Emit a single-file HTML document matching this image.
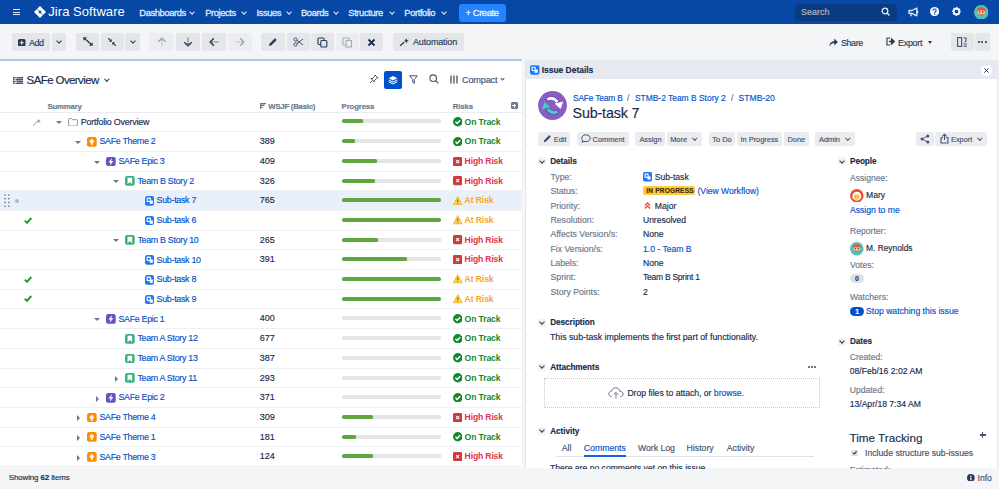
<!DOCTYPE html><html><head><meta charset="utf-8"><style>

*{box-sizing:border-box;margin:0;padding:0}
html,body{width:999px;height:489px;overflow:hidden;background:#F4F5F7;font-family:"Liberation Sans",sans-serif;color:#172B4D}
.abs{position:absolute}
.t{position:absolute;white-space:nowrap;line-height:1;-webkit-text-stroke:0.15px currentColor}
#nav{position:absolute;left:0;top:0;width:999px;height:24px;background:#0747A6}
.nv{position:absolute;top:7.5px;color:#DEEBFF;font-size:9.4px;letter-spacing:-0.4px;line-height:10px;-webkit-text-stroke:0.3px #DEEBFF}
.chev{position:absolute;width:4px;height:4px;border-right:1.3px solid currentColor;border-bottom:1.3px solid currentColor;transform:rotate(45deg)}
.btn{position:absolute;top:33.3px;height:17.5px;background:#E4E6EA;border-radius:2px}
.btn.dis{background:#ECEDF0}
#left{position:absolute;left:0;top:59px;width:522px;height:409px;background:#fff}
#right{position:absolute;left:525px;top:60px;width:472px;height:408px;background:#fff;border-left:1px solid #E3E5E9}
#foot{position:absolute;left:0;top:469px;width:999px;height:20px;background:#F4F5F7}
.row{position:absolute;left:0;width:522px;border-bottom:1px solid #EEF0F2}
.lk{color:#0052CC}
.ic{position:absolute;width:9.5px;height:10px;border-radius:2px}
.caret{position:absolute;width:0;height:0}
.pb{position:absolute;left:341.5px;width:99.5px;height:4px;border-radius:1.5px;background:#E4E5E7;overflow:hidden}
.pb i{position:absolute;left:0;top:0;height:4px;background:#5FA541;border-radius:1.5px}
.rk{position:absolute;left:453px;font-size:8.6px;font-weight:bold;letter-spacing:-0.2px;line-height:10px}
.lbl{color:#6B778C}
.rb{position:absolute;top:131.5px;height:14px;background:#EBECF0;border-radius:2px;font-size:8.2px;line-height:14px;color:#42526E;letter-spacing:-0.2px}

</style></head><body>
<div id="nav">
<div class="abs" style="left:13px;top:9px;width:7px;height:1.4px;background:#DEEBFF"></div>
<div class="abs" style="left:13px;top:11.5px;width:7px;height:1.4px;background:#DEEBFF"></div>
<div class="abs" style="left:13px;top:14px;width:7px;height:1.4px;background:#DEEBFF"></div>
<svg class="abs" style="left:34px;top:6.3px" width="12" height="12" viewBox="0 0 12 12"><path d="M6 0 L12 6 L6 12 L0 6 Z" fill="#fff"/><path d="M6 4.3 L7.7 6 L6 7.7 L4.3 6 Z" fill="#0747A6"/><path d="M3.2 3.2 L5.2 5.2" stroke="#0747A6" stroke-width="0.7"/><path d="M8.8 8.8 L6.8 6.8" stroke="#0747A6" stroke-width="0.7"/></svg>
<div class="t" style="left:48.3px;top:5.3px;font-size:13px;color:#fff;letter-spacing:0.05px;line-height:14px;-webkit-text-stroke:0">Jira Software</div>
<div class="nv" style="left:139.3px">Dashboards</div>
<div class="chev" style="left:190px;top:9.6px;color:#DEEBFF;border-width:1.5px;width:4.2px;height:4.2px"></div>
<div class="nv" style="left:205.2px">Projects</div>
<div class="chev" style="left:242px;top:9.6px;color:#DEEBFF;border-width:1.5px;width:4.2px;height:4.2px"></div>
<div class="nv" style="left:256.4px">Issues</div>
<div class="chev" style="left:286.5px;top:9.6px;color:#DEEBFF;border-width:1.5px;width:4.2px;height:4.2px"></div>
<div class="nv" style="left:301px">Boards</div>
<div class="chev" style="left:333.5px;top:9.6px;color:#DEEBFF;border-width:1.5px;width:4.2px;height:4.2px"></div>
<div class="nv" style="left:348.3px">Structure</div>
<div class="chev" style="left:389.5px;top:9.6px;color:#DEEBFF;border-width:1.5px;width:4.2px;height:4.2px"></div>
<div class="nv" style="left:404.3px">Portfolio</div>
<div class="chev" style="left:442px;top:9.6px;color:#DEEBFF;border-width:1.5px;width:4.2px;height:4.2px"></div>
<div class="abs" style="left:459px;top:3.5px;width:46.5px;height:18px;background:#2684FF;border-radius:3px"></div>
<div class="nv" style="left:465.5px;color:#fff">+ Create</div>
<div class="abs" style="left:795px;top:3.5px;width:102px;height:17.5px;background:#0A3A80;border-radius:3px"></div>
<div class="t" style="left:801px;top:7px;font-size:9px;color:#B3BAC5;line-height:10px">Search</div>
<svg class="abs" style="left:881px;top:7px" width="10" height="10" viewBox="0 0 10 10"><circle cx="4" cy="4" r="2.8" stroke="#DEEBFF" stroke-width="1.3" fill="none"/><path d="M6 6 L8.5 8.5" stroke="#DEEBFF" stroke-width="1.4"/></svg>
<svg class="abs" style="left:907.5px;top:7px" width="11" height="10" viewBox="0 0 11 10"><path d="M1 3.5 H4 L8.8 1 V8.8 L4 6.3 H1Z" stroke="#DEEBFF" stroke-width="1.3" fill="none" stroke-linejoin="round"/><path d="M2.5 6.5 L3.3 9.3" stroke="#DEEBFF" stroke-width="1.3"/><path d="M9.6 3.6 V6.2" stroke="#DEEBFF" stroke-width="1.2"/></svg>
<svg class="abs" style="left:930px;top:7px" width="9.2" height="9.2" viewBox="0 0 9.2 9.2"><circle cx="4.6" cy="4.6" r="4.6" fill="#F4F7FF"/><path d="M3.1 3.6 C3.1 2.6 3.8 2 4.6 2 C5.5 2 6.2 2.6 6.2 3.4 C6.2 4.2 5.6 4.5 5.1 4.9 C4.8 5.1 4.6 5.4 4.6 5.9 V6.2" stroke="#0747A6" stroke-width="1.05" fill="none"/><circle cx="4.6" cy="7.4" r="0.6" fill="#0747A6"/></svg>
<svg class="abs" style="left:951.6px;top:7.3px" width="9" height="9" viewBox="0 0 9 9"><circle cx="4.5" cy="4.5" r="2.75" stroke="#F4F7FF" stroke-width="1.8" fill="none"/><circle cx="4.5" cy="4.5" r="3.75" stroke="#F4F7FF" stroke-width="1.3" fill="none" stroke-dasharray="1.75 1.2" stroke-dashoffset="0.85"/></svg>
<svg class="abs" style="left:973.5px;top:4.8px" width="14.5" height="14.5" viewBox="0 0 14.5 14.5"><circle cx="7.25" cy="7.25" r="7.25" fill="#4FC3B5"/><path d="M3 6 Q3.2 2.2 7.6 2.3 Q11 2.3 11.6 5.2 L11.6 6.5 L3 6.5Z" fill="#E8533A"/><rect x="3.6" y="5.6" width="7.4" height="4" rx="1.5" fill="#F7C29A"/><path d="M3.4 8 Q7.3 13.5 11.2 8 L10.2 8.6 Q7.3 10.6 4.4 8.6Z" fill="#E8533A"/><circle cx="5.8" cy="7" r="0.7" fill="#2A2A2A"/><circle cx="8.8" cy="7" r="0.7" fill="#2A2A2A"/></svg>
</div>
<div class="btn " style="left:12px;width:38px"></div>
<div class="btn " style="left:52px;width:14px"></div>
<div class="btn " style="left:76px;width:23px"></div>
<div class="btn " style="left:101px;width:23px"></div>
<div class="btn " style="left:125px;width:15px"></div>
<div class="btn dis" style="left:149px;width:25px"></div>
<div class="btn " style="left:175.5px;width:24.0px"></div>
<div class="btn " style="left:201.5px;width:24.0px"></div>
<div class="btn dis" style="left:227.5px;width:24.0px"></div>
<div class="btn " style="left:261px;width:24px"></div>
<div class="btn " style="left:287px;width:22.5px"></div>
<div class="btn " style="left:311px;width:23px"></div>
<div class="btn dis" style="left:336px;width:22.5px"></div>
<div class="btn " style="left:360px;width:23px"></div>
<div class="btn " style="left:392.5px;width:71.5px"></div>
<div class="btn " style="left:951.3px;width:22.5px"></div>
<div class="btn " style="left:974.9px;width:14.800000000000068px"></div>
<svg class="abs" style="left:18.3px;top:38.7px" width="7.5" height="7.5" viewBox="0 0 7.5 7.5"><rect width="7.5" height="7.5" rx="1.5" fill="#253858"/><path d="M1.7 3.75 H5.8 M3.75 1.7 V5.8" stroke="#E5E7EB" stroke-width="1.2"/></svg>
<div class="t" style="left:29px;top:37.6px;font-size:9px;line-height:10px;color:#253858;letter-spacing:-0.45px">Add</div>
<div class="chev" style="left:57px;top:39px;color:#253858"></div>
<svg class="abs" style="left:82.8px;top:37.3px" width="10" height="9" viewBox="0 0 10 9"><path d="M2 1.8 L8 7.2" stroke="#253858" stroke-width="1.3"/><path d="M0.3 0.2 L4 0.2 L0.3 3.8 Z M9.7 8.8 L6 8.8 L9.7 5.2 Z" fill="#253858"/></svg>
<svg class="abs" style="left:108px;top:38px" width="8" height="8" viewBox="0 0 8 8"><path d="M0.3 0.3 L3 3 M5 5 L7.7 7.7" stroke="#253858" stroke-width="1.2"/><path d="M3.7 3.7 L3.7 0.9 L0.9 3.7Z M4.3 4.3 L4.3 7.1 L7.1 4.3Z" fill="#253858"/></svg>
<div class="chev" style="left:130.5px;top:39px;color:#253858"></div>
<svg class="abs" style="left:156.5px;top:37.3px;transform:rotate(0deg)" width="10" height="10" viewBox="0 0 10 10"><path d="M5 9.3 L5 2" stroke="#97A0AF" stroke-width="1.1" stroke-dasharray="1 0.8" fill="none"/><path d="M1.3 4.8 L5 1.2 L8.7 4.8" stroke="#97A0AF" stroke-width="1.4" fill="none"/></svg>
<svg class="abs" style="left:182.5px;top:37.3px;transform:rotate(180deg)" width="10" height="10" viewBox="0 0 10 10"><path d="M5 9.3 L5 2" stroke="#253858" stroke-width="1.1" stroke-dasharray="1 0.8" fill="none"/><path d="M1.3 4.8 L5 1.2 L8.7 4.8" stroke="#253858" stroke-width="1.4" fill="none"/></svg>
<svg class="abs" style="left:208.5px;top:37.3px;transform:rotate(-90deg)" width="10" height="10" viewBox="0 0 10 10"><path d="M5 9.3 L5 2" stroke="#253858" stroke-width="1.1" stroke-dasharray="1 0.8" fill="none"/><path d="M1.3 4.8 L5 1.2 L8.7 4.8" stroke="#253858" stroke-width="1.4" fill="none"/></svg>
<svg class="abs" style="left:234.5px;top:37.3px;transform:rotate(90deg)" width="10" height="10" viewBox="0 0 10 10"><path d="M5 9.3 L5 2" stroke="#97A0AF" stroke-width="1.1" stroke-dasharray="1 0.8" fill="none"/><path d="M1.3 4.8 L5 1.2 L8.7 4.8" stroke="#97A0AF" stroke-width="1.4" fill="none"/></svg>
<svg class="abs" style="left:268px;top:37px" width="10" height="10" viewBox="0 0 10 10"><path d="M1 9 L1.5 6.8 L7 1.3 L8.7 3 L3.2 8.5 Z" fill="#253858"/></svg>
<svg class="abs" style="left:293px;top:37px" width="11" height="10" viewBox="0 0 11 10"><circle cx="2.5" cy="2.5" r="1.6" stroke="#42526E" stroke-width="1" fill="none"/><circle cx="2.5" cy="7.5" r="1.6" stroke="#42526E" stroke-width="1" fill="none"/><path d="M3.8 3.3 L10 8 M3.8 6.7 L10 2" stroke="#42526E" stroke-width="1"/></svg>
<svg class="abs" style="left:317px;top:36.5px" width="11" height="11" viewBox="0 0 11 11"><rect x="1" y="1" width="6" height="6.5" rx="1" stroke="#253858" stroke-width="1.1" fill="none"/><rect x="3.8" y="3.5" width="6" height="6.5" rx="1" stroke="#253858" stroke-width="1.1" fill="#E5E7EB"/></svg>
<svg class="abs" style="left:342px;top:36.5px" width="11" height="11" viewBox="0 0 11 11"><rect x="1" y="1" width="6" height="7" rx="0.5" stroke="#A5ADBA" stroke-width="1.1" fill="none"/><rect x="4" y="3.5" width="5.5" height="6.5" stroke="#A5ADBA" stroke-width="1.1" fill="#EDEEF1"/></svg>
<svg class="abs" style="left:367px;top:37.5px" width="9" height="9" viewBox="0 0 9 9"><path d="M1.5 1.5 L7.5 7.5 M7.5 1.5 L1.5 7.5" stroke="#172B4D" stroke-width="1.8"/></svg>
<svg class="abs" style="left:398px;top:36px" width="12" height="12" viewBox="0 0 12 12"><path d="M2 9.8 L6.3 6.3" stroke="#253858" stroke-width="1.3"/><path d="M8.2 2.2 L9 4 L10.8 4.6 L9.1 5.4 L8.6 7.3 L7.6 5.6 L5.8 5.3 L7.3 4.2Z" fill="#253858"/><path d="M6 2.5 L6.6 3.1 M10.6 2.2 L10.1 2.8 M10.3 7.2 L9.8 6.7" stroke="#6B778C" stroke-width="0.6"/></svg>
<div class="t" style="left:413px;top:37px;font-size:9px;line-height:10px;color:#253858;letter-spacing:-0.15px">Automation</div>
<svg class="abs" style="left:829px;top:37.5px" width="9" height="9" viewBox="0 0 9 9"><path d="M0.5 8.5 C0.6 4.8 2.6 3.2 5.3 3.2 L5.3 0.6 L8.9 4.1 L5.3 7.6 L5.3 5 C3.3 5 1.8 6 0.5 8.5Z" fill="#253858"/></svg>
<div class="t" style="left:841px;top:37.5px;font-size:9px;line-height:10px;color:#253858;letter-spacing:-0.45px">Share</div>
<svg class="abs" style="left:886px;top:37px" width="9" height="9" viewBox="0 0 9 9"><path d="M4 1 L1 1 L1 8 L4 8" stroke="#253858" stroke-width="1.1" fill="none"/><path d="M3 4.5 L6 4.5 M5.5 2 L8.3 4.5 L5.5 7Z" stroke="#253858" stroke-width="1.3" fill="#253858"/></svg>
<div class="t" style="left:898px;top:37.5px;font-size:9px;line-height:10px;color:#253858;letter-spacing:-0.3px">Export</div>
<div class="caret abs" style="left:928px;top:41px;border-left:2.7px solid transparent;border-right:2.7px solid transparent;border-top:3px solid #253858"></div>
<svg class="abs" style="left:957.3px;top:37.3px" width="11" height="10" viewBox="0 0 11 10"><rect x="0.6" y="0.6" width="4" height="8.8" stroke="#42526E" stroke-width="1.1" fill="none"/><path d="M6.5 1 L9 1 L9 4 L7.8 5 M6.5 7 L10 7 M6.5 9.3 L10 9.3" stroke="#42526E" stroke-width="1.1" fill="none"/></svg>
<div class="abs" style="left:977.9px;top:40.8px;width:1.8px;height:1.8px;border-radius:50%;background:#253858"></div>
<div class="abs" style="left:981.4px;top:40.8px;width:1.8px;height:1.8px;border-radius:50%;background:#253858"></div>
<div class="abs" style="left:984.9px;top:40.8px;width:1.8px;height:1.8px;border-radius:50%;background:#253858"></div>
<div id="left">
<div class="abs" style="left:0;top:0;width:522px;height:1.5px;background:#A9C8F5"></div>
<svg class="abs" style="left:13.2px;top:17.8px" width="10" height="7.2" viewBox="0 0 10 7.2"><path d="M0 0.7 H2.5 M3.5 0.7 H10 M0 2.8 H1.5 M2.5 2.8 H10 M0 4.8 H2.5 M3.5 4.8 H10 M0 6.6 H1.5 M2.5 6.6 H10" stroke="#42526E" stroke-width="1.4"/></svg>
<div class="t" style="left:26.6px;top:15.3px;font-size:11.5px;line-height:13px;letter-spacing:-0.6px;color:#172B4D">SAFe Overview</div>
<div class="chev" style="left:104.6px;top:17.6px;color:#172B4D;width:3.6px;height:3.6px;border-right-width:1.5px;border-bottom-width:1.5px"></div>
<svg class="abs" style="left:368.5px;top:15px" width="10" height="10" viewBox="0 0 10 10"><path d="M6 1 L9 4 L7.5 4.5 L5.5 6.5 L5.5 8 L2 4.5 L3.5 4.5 L5.5 2.5Z" stroke="#42526E" stroke-width="1" fill="none" stroke-linejoin="round"/><path d="M3.5 6.5 L1 9" stroke="#42526E" stroke-width="1"/></svg>
<div class="abs" style="left:384px;top:11.5px;width:17.5px;height:18px;background:#0052CC;border-radius:2px"></div>
<svg class="abs" style="left:388px;top:15.5px" width="10" height="10" viewBox="0 0 10 10"><path d="M5 1 L9.3 3.2 L5 5.4 L0.7 3.2Z" fill="#fff"/><path d="M0.7 5 L5 7.2 L9.3 5 M0.7 6.8 L5 9 L9.3 6.8" stroke="#fff" stroke-width="1" fill="none"/></svg>
<svg class="abs" style="left:409px;top:15.5px" width="9" height="9" viewBox="0 0 9 9"><path d="M0.7 0.8 H8.3 L5.3 4.5 V8.3 L3.7 7.3 V4.5Z" stroke="#42526E" stroke-width="1" fill="none" stroke-linejoin="round"/></svg>
<svg class="abs" style="left:429px;top:15px" width="10" height="10" viewBox="0 0 10 10"><circle cx="4.2" cy="4.2" r="3.3" stroke="#42526E" stroke-width="1.1" fill="none"/><path d="M6.7 6.7 L9.3 9.3" stroke="#42526E" stroke-width="1.2"/></svg>
<svg class="abs" style="left:450px;top:15.5px" width="8" height="9" viewBox="0 0 8 9"><path d="M1 0.5 V8.5 M4 0.5 V8.5 M7 0.5 V8.5" stroke="#42526E" stroke-width="1.3"/></svg>
<div class="t" style="left:462px;top:15.5px;font-size:9.2px;line-height:10px;letter-spacing:-0.2px;color:#42526E">Compact</div>
<div class="chev" style="left:500.8px;top:17.5px;color:#42526E;width:3.2px;height:3.2px"></div>
<div class="t" style="left:47.5px;top:43.3px;font-size:7.8px;line-height:9px;font-weight:bold;letter-spacing:-0.2px;color:#6B778C">Summary</div>
<svg class="abs" style="left:259.5px;top:43.5px" width="6" height="6" viewBox="0 0 6 6"><path d="M0 0.6 H6 M0 2.4 H4.5 M0 4.2 H3 M0.6 0 V6" stroke="#6B778C" stroke-width="1.1"/></svg>
<div class="t" style="left:268.3px;top:43.3px;font-size:7.8px;line-height:9px;font-weight:bold;letter-spacing:-0.25px;color:#6B778C">WSJF (Basic)</div>
<div class="t" style="left:341.6px;top:43.3px;font-size:7.8px;line-height:9px;font-weight:bold;letter-spacing:-0.15px;color:#6B778C">Progress</div>
<div class="t" style="left:452.8px;top:43.3px;font-size:7.8px;line-height:9px;font-weight:bold;letter-spacing:-0.15px;color:#6B778C">Risks</div>
<div class="abs" style="left:510.5px;top:43px;width:7px;height:7px;background:#6B778C;border-radius:1.5px"></div>
<div class="abs" style="left:512px;top:46px;width:4px;height:1px;background:#fff"></div><div class="abs" style="left:513.5px;top:44.5px;width:1px;height:4px;background:#fff"></div>
<div class="abs" style="left:0;top:52.5px;width:522px;height:1px;background:#EBECF0"></div>
<div class="row" style="top:53.50px;height:19.70px;"></div>
<svg class="abs" style="left:68px;top:58.55px" width="10.2" height="8.6" viewBox="0 0 10.2 8.6"><path d="M0.55 1.3 Q0.55 0.55 1.3 0.55 H3.6 L4.6 1.7 H8.9 Q9.65 1.7 9.65 2.45 V7.3 Q9.65 8.05 8.9 8.05 H1.3 Q0.55 8.05 0.55 7.3Z" stroke="#8993A4" stroke-width="1" fill="none" stroke-linejoin="round"/></svg>
<svg class="abs" style="left:31.5px;top:57.35px" width="11" height="11" viewBox="0 0 11 11"><path d="M1.3 9.3 L4.8 6.2" stroke="#8993A4" stroke-width="1"/><path d="M6.7 3 L7.3 4.5 L8.8 5 L7.4 5.7 L7 7.2 L6.2 5.9 L4.7 5.6 L5.9 4.6Z" fill="#8993A4"/><path d="M4.8 2.6 L5.3 3.1 M8.8 2.6 L8.3 3.1 M8.6 7.3 L8.2 6.9" stroke="#A5ADBA" stroke-width="0.6"/></svg>
<div class="caret" style="left:55.50px;top:62.15px;border-left:3.1px solid transparent;border-right:3.1px solid transparent;border-top:3.1px solid #6B778C"></div>
<div class="t" style="left:80.70px;top:57.65px;font-size:8.9px;line-height:10px;letter-spacing:-0.2px;color:#172B4D">Portfolio Overview</div>
<div class="pb" style="top:60.45px"><i style="width:22%"></i></div>
<svg class="abs" style="left:452.8px;top:58.05px" width="9.5" height="9.5" viewBox="0 0 10 10"><circle cx="5" cy="5" r="5" fill="#14892C"/><path d="M2.6 5.1 L4.3 6.8 L7.5 3.4" stroke="#fff" stroke-width="1.5" fill="none"/></svg>
<div class="rk" style="top:57.55px;left:464.6px;color:#14892C;letter-spacing:-0.12px">On Track</div>
<div class="row" style="top:73.20px;height:19.70px;"></div>
<svg class="ic" style="left:87.3px;top:77.95px;width:9.7px;height:9.7px" viewBox="0 0 9.5 9.5"><rect width="9.5" height="9.5" rx="1.4" fill="#FF8B00"/><circle cx="4.7" cy="4.1" r="2" fill="#fff"/><rect x="3.8" y="5" width="1.8" height="1.9" fill="#fff"/><rect x="3.8" y="7.15" width="1.8" height="0.8" fill="#fff"/></svg>
<div class="caret" style="left:74.80px;top:81.85px;border-left:3.1px solid transparent;border-right:3.1px solid transparent;border-top:3.1px solid #6B778C"></div>
<div class="t" style="left:99.40px;top:77.35px;font-size:8.9px;line-height:10px;letter-spacing:-0.3px;color:#0052CC">SAFe Theme 2</div>
<div class="t" style="left:259.8px;top:77.15px;font-size:9px;line-height:10px;letter-spacing:-0.05px;color:#172B4D">389</div>
<div class="pb" style="top:80.15px"><i style="width:14%"></i></div>
<svg class="abs" style="left:452.8px;top:77.75px" width="9.5" height="9.5" viewBox="0 0 10 10"><circle cx="5" cy="5" r="5" fill="#14892C"/><path d="M2.6 5.1 L4.3 6.8 L7.5 3.4" stroke="#fff" stroke-width="1.5" fill="none"/></svg>
<div class="rk" style="top:77.25px;left:464.6px;color:#14892C;letter-spacing:-0.12px">On Track</div>
<div class="row" style="top:92.90px;height:19.70px;"></div>
<svg class="ic" style="left:106.3px;top:97.65px;width:9.7px;height:9.7px" viewBox="0 0 9.5 9.5"><rect width="9.5" height="9.5" rx="1.4" fill="#6554C0"/><path d="M6 1 L2.4 5.5 H4.5 L3.6 8.7 L7.2 4.1 H5.1 Z" fill="#fff"/></svg>
<div class="caret" style="left:93.80px;top:101.55px;border-left:3.1px solid transparent;border-right:3.1px solid transparent;border-top:3.1px solid #6B778C"></div>
<div class="t" style="left:118.40px;top:97.05px;font-size:8.9px;line-height:10px;letter-spacing:-0.3px;color:#0052CC">SAFe Epic 3</div>
<div class="t" style="left:259.8px;top:96.85px;font-size:9px;line-height:10px;letter-spacing:-0.05px;color:#172B4D">409</div>
<div class="pb" style="top:99.85px"><i style="width:35.5%"></i></div>
<svg class="abs" style="left:453px;top:97.55px" width="9.3" height="9.3" viewBox="0 0 10 10"><rect width="10" height="10" rx="1.6" fill="#CF3B3B"/><path d="M3.4 3.4 L6.6 6.6 M6.6 3.4 L3.4 6.6" stroke="#fff" stroke-width="1.2"/></svg>
<div class="rk" style="top:96.95px;left:464.6px;color:#DE3549;letter-spacing:-0.15px">High Risk</div>
<div class="row" style="top:112.60px;height:19.70px;"></div>
<svg class="ic" style="left:125.3px;top:117.35px;width:9.7px;height:9.7px" viewBox="0 0 9.5 9.5"><rect width="9.5" height="9.5" rx="1.4" fill="#36B37E"/><path d="M2.5 1.8 H7 V8 L4.75 5.9 L2.5 8Z" fill="#fff"/></svg>
<div class="caret" style="left:112.80px;top:121.25px;border-left:3.1px solid transparent;border-right:3.1px solid transparent;border-top:3.1px solid #6B778C"></div>
<div class="t" style="left:137.40px;top:116.75px;font-size:8.9px;line-height:10px;letter-spacing:-0.3px;color:#0052CC">Team B Story 2</div>
<div class="t" style="left:259.8px;top:116.55px;font-size:9px;line-height:10px;letter-spacing:-0.05px;color:#172B4D">326</div>
<div class="pb" style="top:119.55px"><i style="width:34%"></i></div>
<svg class="abs" style="left:453px;top:117.25px" width="9.3" height="9.3" viewBox="0 0 10 10"><rect width="10" height="10" rx="1.6" fill="#CF3B3B"/><path d="M3.4 3.4 L6.6 6.6 M6.6 3.4 L3.4 6.6" stroke="#fff" stroke-width="1.2"/></svg>
<div class="rk" style="top:116.65px;left:464.6px;color:#DE3549;letter-spacing:-0.15px">High Risk</div>
<div class="row" style="top:132.30px;height:19.70px;background:#EAF0FB;"></div>
<svg class="ic" style="left:144.5px;top:137.05px;width:9.7px;height:9.7px" viewBox="0 0 9.5 9.5"><rect width="9.5" height="9.5" rx="1.4" fill="#1D7AFC"/><rect x="2.1" y="2.1" width="3.2" height="3.3" rx="0.6" fill="none" stroke="#fff" stroke-width="1.1"/><rect x="4.6" y="4.4" width="3.1" height="3.2" fill="#fff"/></svg>
<div class="t" style="left:156.60px;top:136.45px;font-size:8.9px;line-height:10px;letter-spacing:-0.3px;color:#0052CC">Sub-task 7</div>
<svg class="abs" style="left:3px;top:134.15px" width="8" height="16" viewBox="0 0 8 16"><circle cx="2" cy="2" r="0.75" fill="#505F79"/><circle cx="5.8" cy="2" r="0.75" fill="#505F79"/><circle cx="2" cy="5.7" r="0.75" fill="#505F79"/><circle cx="5.8" cy="5.7" r="0.75" fill="#505F79"/><circle cx="2" cy="9.5" r="0.75" fill="#505F79"/><circle cx="5.8" cy="9.5" r="0.75" fill="#505F79"/><circle cx="2" cy="13.2" r="0.75" fill="#505F79"/><circle cx="5.8" cy="13.2" r="0.75" fill="#505F79"/></svg>
<div class="abs" style="left:14.6px;top:139.65px;width:4.8px;height:4.8px;border-radius:50%;background:#B3B9C4"></div>
<div class="t" style="left:259.8px;top:136.25px;font-size:9px;line-height:10px;letter-spacing:-0.05px;color:#172B4D">765</div>
<div class="pb" style="top:139.25px"><i style="width:100%"></i></div>
<svg class="abs" style="left:453px;top:136.55px" width="9.5" height="9.5" viewBox="0 0 10 10"><path d="M5 0.6 L9.6 9.3 H0.4Z" fill="#FFD450" stroke="#E6A700" stroke-width="0.7" stroke-linejoin="round"/><path d="M5 3.6 V6.3 M5 7.2 V8.1" stroke="#3B3B3B" stroke-width="0.9"/></svg>
<div class="rk" style="top:136.35px;left:464.6px;color:#F5A623;letter-spacing:-0.1px">At Risk</div>
<div class="row" style="top:152.00px;height:19.70px;"></div>
<svg class="ic" style="left:144.5px;top:156.75px;width:9.7px;height:9.7px" viewBox="0 0 9.5 9.5"><rect width="9.5" height="9.5" rx="1.4" fill="#1D7AFC"/><rect x="2.1" y="2.1" width="3.2" height="3.3" rx="0.6" fill="none" stroke="#fff" stroke-width="1.1"/><rect x="4.6" y="4.4" width="3.1" height="3.2" fill="#fff"/></svg>
<div class="t" style="left:156.60px;top:156.15px;font-size:8.9px;line-height:10px;letter-spacing:-0.3px;color:#0052CC">Sub-task 6</div>
<svg class="abs" style="left:24px;top:157.55px" width="8" height="7" viewBox="0 0 8 7"><path d="M0.8 3.6 L3 5.8 L7.3 1" stroke="#1A9A1A" stroke-width="1.9" fill="none"/></svg>
<div class="pb" style="top:158.95px"><i style="width:100%"></i></div>
<svg class="abs" style="left:453px;top:156.25px" width="9.5" height="9.5" viewBox="0 0 10 10"><path d="M5 0.6 L9.6 9.3 H0.4Z" fill="#FFD450" stroke="#E6A700" stroke-width="0.7" stroke-linejoin="round"/><path d="M5 3.6 V6.3 M5 7.2 V8.1" stroke="#3B3B3B" stroke-width="0.9"/></svg>
<div class="rk" style="top:156.05px;left:464.6px;color:#F5A623;letter-spacing:-0.1px">At Risk</div>
<div class="row" style="top:171.70px;height:19.70px;"></div>
<svg class="ic" style="left:125.3px;top:176.45px;width:9.7px;height:9.7px" viewBox="0 0 9.5 9.5"><rect width="9.5" height="9.5" rx="1.4" fill="#36B37E"/><path d="M2.5 1.8 H7 V8 L4.75 5.9 L2.5 8Z" fill="#fff"/></svg>
<div class="caret" style="left:112.80px;top:180.35px;border-left:3.1px solid transparent;border-right:3.1px solid transparent;border-top:3.1px solid #6B778C"></div>
<div class="t" style="left:137.40px;top:175.85px;font-size:8.9px;line-height:10px;letter-spacing:-0.3px;color:#0052CC">Team B Story 10</div>
<div class="t" style="left:259.8px;top:175.65px;font-size:9px;line-height:10px;letter-spacing:-0.05px;color:#172B4D">265</div>
<div class="pb" style="top:178.65px"><i style="width:36.6%"></i></div>
<svg class="abs" style="left:453px;top:176.35px" width="9.3" height="9.3" viewBox="0 0 10 10"><rect width="10" height="10" rx="1.6" fill="#CF3B3B"/><path d="M3.4 3.4 L6.6 6.6 M6.6 3.4 L3.4 6.6" stroke="#fff" stroke-width="1.2"/></svg>
<div class="rk" style="top:175.75px;left:464.6px;color:#DE3549;letter-spacing:-0.15px">High Risk</div>
<div class="row" style="top:191.40px;height:19.70px;"></div>
<svg class="ic" style="left:144.5px;top:196.15px;width:9.7px;height:9.7px" viewBox="0 0 9.5 9.5"><rect width="9.5" height="9.5" rx="1.4" fill="#1D7AFC"/><rect x="2.1" y="2.1" width="3.2" height="3.3" rx="0.6" fill="none" stroke="#fff" stroke-width="1.1"/><rect x="4.6" y="4.4" width="3.1" height="3.2" fill="#fff"/></svg>
<div class="t" style="left:156.60px;top:195.55px;font-size:8.9px;line-height:10px;letter-spacing:-0.3px;color:#0052CC">Sub-task 10</div>
<div class="t" style="left:259.8px;top:195.35px;font-size:9px;line-height:10px;letter-spacing:-0.05px;color:#172B4D">391</div>
<div class="pb" style="top:198.35px"><i style="width:66%"></i></div>
<svg class="abs" style="left:453px;top:196.05px" width="9.3" height="9.3" viewBox="0 0 10 10"><rect width="10" height="10" rx="1.6" fill="#CF3B3B"/><path d="M3.4 3.4 L6.6 6.6 M6.6 3.4 L3.4 6.6" stroke="#fff" stroke-width="1.2"/></svg>
<div class="rk" style="top:195.45px;left:464.6px;color:#DE3549;letter-spacing:-0.15px">High Risk</div>
<div class="row" style="top:211.10px;height:19.70px;"></div>
<svg class="ic" style="left:144.5px;top:215.85px;width:9.7px;height:9.7px" viewBox="0 0 9.5 9.5"><rect width="9.5" height="9.5" rx="1.4" fill="#1D7AFC"/><rect x="2.1" y="2.1" width="3.2" height="3.3" rx="0.6" fill="none" stroke="#fff" stroke-width="1.1"/><rect x="4.6" y="4.4" width="3.1" height="3.2" fill="#fff"/></svg>
<div class="t" style="left:156.60px;top:215.25px;font-size:8.9px;line-height:10px;letter-spacing:-0.3px;color:#0052CC">Sub-task 8</div>
<svg class="abs" style="left:24px;top:216.65px" width="8" height="7" viewBox="0 0 8 7"><path d="M0.8 3.6 L3 5.8 L7.3 1" stroke="#1A9A1A" stroke-width="1.9" fill="none"/></svg>
<div class="pb" style="top:218.05px"><i style="width:100%"></i></div>
<svg class="abs" style="left:453px;top:215.35px" width="9.5" height="9.5" viewBox="0 0 10 10"><path d="M5 0.6 L9.6 9.3 H0.4Z" fill="#FFD450" stroke="#E6A700" stroke-width="0.7" stroke-linejoin="round"/><path d="M5 3.6 V6.3 M5 7.2 V8.1" stroke="#3B3B3B" stroke-width="0.9"/></svg>
<div class="rk" style="top:215.15px;left:464.6px;color:#F5A623;letter-spacing:-0.1px">At Risk</div>
<div class="row" style="top:230.80px;height:19.70px;"></div>
<svg class="ic" style="left:144.5px;top:235.55px;width:9.7px;height:9.7px" viewBox="0 0 9.5 9.5"><rect width="9.5" height="9.5" rx="1.4" fill="#1D7AFC"/><rect x="2.1" y="2.1" width="3.2" height="3.3" rx="0.6" fill="none" stroke="#fff" stroke-width="1.1"/><rect x="4.6" y="4.4" width="3.1" height="3.2" fill="#fff"/></svg>
<div class="t" style="left:156.60px;top:234.95px;font-size:8.9px;line-height:10px;letter-spacing:-0.3px;color:#0052CC">Sub-task 9</div>
<svg class="abs" style="left:24px;top:236.35px" width="8" height="7" viewBox="0 0 8 7"><path d="M0.8 3.6 L3 5.8 L7.3 1" stroke="#1A9A1A" stroke-width="1.9" fill="none"/></svg>
<div class="pb" style="top:237.75px"><i style="width:100%"></i></div>
<svg class="abs" style="left:453px;top:235.05px" width="9.5" height="9.5" viewBox="0 0 10 10"><path d="M5 0.6 L9.6 9.3 H0.4Z" fill="#FFD450" stroke="#E6A700" stroke-width="0.7" stroke-linejoin="round"/><path d="M5 3.6 V6.3 M5 7.2 V8.1" stroke="#3B3B3B" stroke-width="0.9"/></svg>
<div class="rk" style="top:234.85px;left:464.6px;color:#F5A623;letter-spacing:-0.1px">At Risk</div>
<div class="row" style="top:250.50px;height:19.70px;"></div>
<svg class="ic" style="left:106.3px;top:255.25px;width:9.7px;height:9.7px" viewBox="0 0 9.5 9.5"><rect width="9.5" height="9.5" rx="1.4" fill="#6554C0"/><path d="M6 1 L2.4 5.5 H4.5 L3.6 8.7 L7.2 4.1 H5.1 Z" fill="#fff"/></svg>
<div class="caret" style="left:93.80px;top:259.15px;border-left:3.1px solid transparent;border-right:3.1px solid transparent;border-top:3.1px solid #6B778C"></div>
<div class="t" style="left:118.40px;top:254.65px;font-size:8.9px;line-height:10px;letter-spacing:-0.3px;color:#0052CC">SAFe Epic 1</div>
<div class="t" style="left:259.8px;top:254.45px;font-size:9px;line-height:10px;letter-spacing:-0.05px;color:#172B4D">400</div>
<div class="pb" style="top:257.45px"><i style="width:0%"></i></div>
<svg class="abs" style="left:452.8px;top:255.05px" width="9.5" height="9.5" viewBox="0 0 10 10"><circle cx="5" cy="5" r="5" fill="#14892C"/><path d="M2.6 5.1 L4.3 6.8 L7.5 3.4" stroke="#fff" stroke-width="1.5" fill="none"/></svg>
<div class="rk" style="top:254.55px;left:464.6px;color:#14892C;letter-spacing:-0.12px">On Track</div>
<div class="row" style="top:270.20px;height:19.70px;"></div>
<svg class="ic" style="left:125.3px;top:274.95px;width:9.7px;height:9.7px" viewBox="0 0 9.5 9.5"><rect width="9.5" height="9.5" rx="1.4" fill="#36B37E"/><path d="M2.5 1.8 H7 V8 L4.75 5.9 L2.5 8Z" fill="#fff"/></svg>
<div class="t" style="left:137.40px;top:274.35px;font-size:8.9px;line-height:10px;letter-spacing:-0.3px;color:#0052CC">Team A Story 12</div>
<div class="t" style="left:259.8px;top:274.15px;font-size:9px;line-height:10px;letter-spacing:-0.05px;color:#172B4D">677</div>
<div class="pb" style="top:277.15px"><i style="width:0%"></i></div>
<svg class="abs" style="left:452.8px;top:274.75px" width="9.5" height="9.5" viewBox="0 0 10 10"><circle cx="5" cy="5" r="5" fill="#14892C"/><path d="M2.6 5.1 L4.3 6.8 L7.5 3.4" stroke="#fff" stroke-width="1.5" fill="none"/></svg>
<div class="rk" style="top:274.25px;left:464.6px;color:#14892C;letter-spacing:-0.12px">On Track</div>
<div class="row" style="top:289.90px;height:19.70px;"></div>
<svg class="ic" style="left:125.3px;top:294.65px;width:9.7px;height:9.7px" viewBox="0 0 9.5 9.5"><rect width="9.5" height="9.5" rx="1.4" fill="#36B37E"/><path d="M2.5 1.8 H7 V8 L4.75 5.9 L2.5 8Z" fill="#fff"/></svg>
<div class="t" style="left:137.40px;top:294.05px;font-size:8.9px;line-height:10px;letter-spacing:-0.3px;color:#0052CC">Team A Story 13</div>
<div class="t" style="left:259.8px;top:293.85px;font-size:9px;line-height:10px;letter-spacing:-0.05px;color:#172B4D">387</div>
<div class="pb" style="top:296.85px"><i style="width:0%"></i></div>
<svg class="abs" style="left:452.8px;top:294.45px" width="9.5" height="9.5" viewBox="0 0 10 10"><circle cx="5" cy="5" r="5" fill="#14892C"/><path d="M2.6 5.1 L4.3 6.8 L7.5 3.4" stroke="#fff" stroke-width="1.5" fill="none"/></svg>
<div class="rk" style="top:293.95px;left:464.6px;color:#14892C;letter-spacing:-0.12px">On Track</div>
<div class="row" style="top:309.60px;height:19.70px;"></div>
<svg class="ic" style="left:125.3px;top:314.35px;width:9.7px;height:9.7px" viewBox="0 0 9.5 9.5"><rect width="9.5" height="9.5" rx="1.4" fill="#36B37E"/><path d="M2.5 1.8 H7 V8 L4.75 5.9 L2.5 8Z" fill="#fff"/></svg>
<div class="caret" style="left:114.50px;top:316.85px;border-top:3.1px solid transparent;border-bottom:3.1px solid transparent;border-left:3.3px solid #6B778C"></div>
<div class="t" style="left:137.40px;top:313.75px;font-size:8.9px;line-height:10px;letter-spacing:-0.3px;color:#0052CC">Team A Story 11</div>
<div class="t" style="left:259.8px;top:313.55px;font-size:9px;line-height:10px;letter-spacing:-0.05px;color:#172B4D">293</div>
<div class="pb" style="top:316.55px"><i style="width:0%"></i></div>
<svg class="abs" style="left:452.8px;top:314.15px" width="9.5" height="9.5" viewBox="0 0 10 10"><circle cx="5" cy="5" r="5" fill="#14892C"/><path d="M2.6 5.1 L4.3 6.8 L7.5 3.4" stroke="#fff" stroke-width="1.5" fill="none"/></svg>
<div class="rk" style="top:313.65px;left:464.6px;color:#14892C;letter-spacing:-0.12px">On Track</div>
<div class="row" style="top:329.30px;height:19.70px;"></div>
<svg class="ic" style="left:106.3px;top:334.05px;width:9.7px;height:9.7px" viewBox="0 0 9.5 9.5"><rect width="9.5" height="9.5" rx="1.4" fill="#6554C0"/><path d="M6 1 L2.4 5.5 H4.5 L3.6 8.7 L7.2 4.1 H5.1 Z" fill="#fff"/></svg>
<div class="caret" style="left:95.50px;top:336.55px;border-top:3.1px solid transparent;border-bottom:3.1px solid transparent;border-left:3.3px solid #6B778C"></div>
<div class="t" style="left:118.40px;top:333.45px;font-size:8.9px;line-height:10px;letter-spacing:-0.3px;color:#0052CC">SAFe Epic 2</div>
<div class="t" style="left:259.8px;top:333.25px;font-size:9px;line-height:10px;letter-spacing:-0.05px;color:#172B4D">371</div>
<div class="pb" style="top:336.25px"><i style="width:0%"></i></div>
<svg class="abs" style="left:452.8px;top:333.85px" width="9.5" height="9.5" viewBox="0 0 10 10"><circle cx="5" cy="5" r="5" fill="#14892C"/><path d="M2.6 5.1 L4.3 6.8 L7.5 3.4" stroke="#fff" stroke-width="1.5" fill="none"/></svg>
<div class="rk" style="top:333.35px;left:464.6px;color:#14892C;letter-spacing:-0.12px">On Track</div>
<div class="row" style="top:349.00px;height:19.70px;"></div>
<svg class="ic" style="left:87.3px;top:353.75px;width:9.7px;height:9.7px" viewBox="0 0 9.5 9.5"><rect width="9.5" height="9.5" rx="1.4" fill="#FF8B00"/><circle cx="4.7" cy="4.1" r="2" fill="#fff"/><rect x="3.8" y="5" width="1.8" height="1.9" fill="#fff"/><rect x="3.8" y="7.15" width="1.8" height="0.8" fill="#fff"/></svg>
<div class="caret" style="left:76.50px;top:356.25px;border-top:3.1px solid transparent;border-bottom:3.1px solid transparent;border-left:3.3px solid #6B778C"></div>
<div class="t" style="left:99.40px;top:353.15px;font-size:8.9px;line-height:10px;letter-spacing:-0.3px;color:#0052CC">SAFe Theme 4</div>
<div class="t" style="left:259.8px;top:352.95px;font-size:9px;line-height:10px;letter-spacing:-0.05px;color:#172B4D">309</div>
<div class="pb" style="top:355.95px"><i style="width:32%"></i></div>
<svg class="abs" style="left:453px;top:353.65px" width="9.3" height="9.3" viewBox="0 0 10 10"><rect width="10" height="10" rx="1.6" fill="#CF3B3B"/><path d="M3.4 3.4 L6.6 6.6 M6.6 3.4 L3.4 6.6" stroke="#fff" stroke-width="1.2"/></svg>
<div class="rk" style="top:353.05px;left:464.6px;color:#DE3549;letter-spacing:-0.15px">High Risk</div>
<div class="row" style="top:368.70px;height:19.70px;"></div>
<svg class="ic" style="left:87.3px;top:373.45px;width:9.7px;height:9.7px" viewBox="0 0 9.5 9.5"><rect width="9.5" height="9.5" rx="1.4" fill="#FF8B00"/><circle cx="4.7" cy="4.1" r="2" fill="#fff"/><rect x="3.8" y="5" width="1.8" height="1.9" fill="#fff"/><rect x="3.8" y="7.15" width="1.8" height="0.8" fill="#fff"/></svg>
<div class="caret" style="left:76.50px;top:375.95px;border-top:3.1px solid transparent;border-bottom:3.1px solid transparent;border-left:3.3px solid #6B778C"></div>
<div class="t" style="left:99.40px;top:372.85px;font-size:8.9px;line-height:10px;letter-spacing:-0.3px;color:#0052CC">SAFe Theme 1</div>
<div class="t" style="left:259.8px;top:372.65px;font-size:9px;line-height:10px;letter-spacing:-0.05px;color:#172B4D">181</div>
<div class="pb" style="top:375.65px"><i style="width:15%"></i></div>
<svg class="abs" style="left:452.8px;top:373.25px" width="9.5" height="9.5" viewBox="0 0 10 10"><circle cx="5" cy="5" r="5" fill="#14892C"/><path d="M2.6 5.1 L4.3 6.8 L7.5 3.4" stroke="#fff" stroke-width="1.5" fill="none"/></svg>
<div class="rk" style="top:372.75px;left:464.6px;color:#14892C;letter-spacing:-0.12px">On Track</div>
<div class="row" style="top:388.40px;height:19.70px;"></div>
<svg class="ic" style="left:87.3px;top:393.15px;width:9.7px;height:9.7px" viewBox="0 0 9.5 9.5"><rect width="9.5" height="9.5" rx="1.4" fill="#FF8B00"/><circle cx="4.7" cy="4.1" r="2" fill="#fff"/><rect x="3.8" y="5" width="1.8" height="1.9" fill="#fff"/><rect x="3.8" y="7.15" width="1.8" height="0.8" fill="#fff"/></svg>
<div class="caret" style="left:76.50px;top:395.65px;border-top:3.1px solid transparent;border-bottom:3.1px solid transparent;border-left:3.3px solid #6B778C"></div>
<div class="t" style="left:99.40px;top:392.55px;font-size:8.9px;line-height:10px;letter-spacing:-0.3px;color:#0052CC">SAFe Theme 3</div>
<div class="t" style="left:259.8px;top:392.35px;font-size:9px;line-height:10px;letter-spacing:-0.05px;color:#172B4D">124</div>
<div class="pb" style="top:395.35px"><i style="width:32%"></i></div>
<svg class="abs" style="left:453px;top:393.05px" width="9.3" height="9.3" viewBox="0 0 10 10"><rect width="10" height="10" rx="1.6" fill="#CF3B3B"/><path d="M3.4 3.4 L6.6 6.6 M6.6 3.4 L3.4 6.6" stroke="#fff" stroke-width="1.2"/></svg>
<div class="rk" style="top:392.45px;left:464.6px;color:#DE3549;letter-spacing:-0.15px">High Risk</div>
</div>
<div id="right"></div>
<div class="abs" style="left:526px;top:60px;width:471px;height:19px;background:#E6EAF0"></div>
<svg class="abs" style="left:530px;top:65px" width="9.5" height="9.8" viewBox="0 0 9.5 9.5"><rect width="9.5" height="9.5" rx="1.8" fill="#1D7AFC"/><rect x="2.1" y="2.1" width="3.2" height="3.3" rx="0.6" fill="none" stroke="#fff" stroke-width="1.1"/><rect x="4.6" y="4.4" width="3.1" height="3.2" fill="#fff"/></svg>
<div class="t" style="left:541.7px;top:64.00px;font-size:8.45px;line-height:12px;color:#172B4D;font-weight:bold;letter-spacing:0px;">Issue Details</div>
<svg class="abs" style="left:981px;top:64.8px" width="11" height="11" viewBox="0 0 11 11"><circle cx="5.5" cy="5.5" r="5.5" fill="#fff"/><path d="M3.4 3.4 L7.6 7.6 M7.6 3.4 L3.4 7.6" stroke="#253858" stroke-width="1"/></svg>
<div class="abs" style="left:997px;top:60px;width:2px;height:408px;background:#ECEDF0"></div>
<svg class="abs" style="left:538px;top:91px" width="29" height="29" viewBox="0 0 29 29"><circle cx="14.5" cy="14.5" r="14.4" fill="#8B5CC8"/><path d="M8.8 9.6 Q14 3.6 20.2 11.8" stroke="#5B3C9E" stroke-width="4" fill="none"/><path d="M9.3 8.8 Q14 4.8 19.6 11" stroke="#fff" stroke-width="2.8" fill="none"/><path d="M16.6 12.4 L25.2 10.6 L22.6 18Z" fill="#fff"/><path d="M20 19.6 Q15 25.5 8.8 17.4" stroke="#5B3C9E" stroke-width="4" fill="none"/><path d="M19.5 20.3 Q14.5 24 9.4 18" stroke="#3ED5C2" stroke-width="2.8" fill="none"/><path d="M4 18.2 L6.6 10.9 L12 16.2Z" fill="#3ED5C2"/></svg>
<div class="t" style="left:573px;top:92.00px;font-size:8.45px;line-height:12px;color:#0052CC;font-weight:normal;letter-spacing:-0.2px;">SAFe Team B</div>
<div class="t" style="left:627px;top:92.00px;font-size:8.6px;line-height:12px;color:#6B778C;font-weight:normal;letter-spacing:0px;">/</div>
<div class="t" style="left:634.9px;top:92.00px;font-size:8.45px;line-height:12px;color:#0052CC;font-weight:normal;letter-spacing:0px;">STMB-2 Team B Story 2</div>
<div class="t" style="left:731px;top:92.00px;font-size:8.6px;line-height:12px;color:#6B778C;font-weight:normal;letter-spacing:0px;">/</div>
<div class="t" style="left:738.6px;top:92.00px;font-size:8.6px;line-height:12px;color:#0052CC;font-weight:normal;letter-spacing:0px;">STMB-20</div>
<div class="t" style="left:572.5px;top:105px;font-size:14.3px;line-height:16px;color:#172B4D;letter-spacing:-0.15px">Sub-task 7</div>
<div class="rb" style="left:538.2px;width:32.3px"></div>
<div class="t" style="left:553.8px;top:133.7px;font-size:7.4px;line-height:11px;color:#42526E">Edit</div>
<svg class="abs" style="left:543px;top:134px" width="9" height="9" viewBox="0 0 9 9"><path d="M0.8 8.2 L1.2 6.2 L6.3 1.1 L7.9 2.7 L2.8 7.8Z" fill="#42526E"/></svg>
<div class="rb" style="left:576.8px;width:52.2px"></div>
<div class="t" style="left:592.6px;top:133.7px;font-size:7.4px;line-height:11px;color:#42526E">Comment</div>
<svg class="abs" style="left:581px;top:134px" width="10" height="9" viewBox="0 0 10 9"><path d="M5 0.8 C7.5 0.8 9.2 2.3 9.2 4.2 C9.2 6.1 7.5 7.6 5 7.6 C4.3 7.6 3.6 7.5 3 7.2 L1 8.3 L1.6 6.4 C1 5.8 0.8 5 0.8 4.2 C0.8 2.3 2.5 0.8 5 0.8Z" stroke="#42526E" stroke-width="1" fill="none"/></svg>
<div class="rb" style="left:635.2px;width:30.1px"></div>
<div class="t" style="left:639.4px;top:133.7px;font-size:7.4px;line-height:11px;color:#42526E">Assign</div>
<div class="rb" style="left:667px;width:35.0px"></div>
<div class="t" style="left:670.2px;top:133.7px;font-size:7.4px;line-height:11px;color:#42526E">More</div>
<div class="chev" style="left:693px;top:135.8px;color:#42526E;width:3.5px;height:3.5px"></div>
<div class="rb" style="left:708.6px;width:26.9px"></div>
<div class="t" style="left:712.3px;top:133.7px;font-size:7.4px;line-height:11px;color:#42526E">To Do</div>
<div class="rb" style="left:737.2px;width:44.8px"></div>
<div class="t" style="left:740.5px;top:133.7px;font-size:7.4px;line-height:11px;color:#42526E">In Progress</div>
<div class="rb" style="left:783.6px;width:25.1px"></div>
<div class="t" style="left:787.5px;top:133.7px;font-size:7.4px;line-height:11px;color:#42526E">Done</div>
<div class="rb" style="left:815.2px;width:39.8px"></div>
<div class="t" style="left:819px;top:133.7px;font-size:7.4px;line-height:11px;color:#42526E">Admin</div>
<div class="chev" style="left:845.5px;top:135.8px;color:#42526E;width:3.5px;height:3.5px"></div>
<div class="rb" style="left:916.3px;width:17.4px"></div>
<svg class="abs" style="left:920px;top:133.5px" width="10" height="10" viewBox="0 0 10 10"><circle cx="7.8" cy="2" r="1.5" fill="#42526E"/><circle cx="2" cy="5" r="1.5" fill="#42526E"/><circle cx="7.8" cy="8" r="1.5" fill="#42526E"/><path d="M7.8 2 L2 5 L7.8 8" stroke="#42526E" stroke-width="0.9" fill="none"/></svg>
<div class="rb" style="left:935.2px;width:51.6px"></div>
<div class="t" style="left:951px;top:133.7px;font-size:7.4px;line-height:11px;color:#42526E">Export</div>
<svg class="abs" style="left:940px;top:133px" width="9" height="11" viewBox="0 0 9 11"><path d="M4.5 7 V1.2 M2.3 3.4 L4.5 1.2 L6.7 3.4" stroke="#42526E" stroke-width="1.1" fill="none"/><path d="M3 4.8 H1 V10 H8 V4.8 H6" stroke="#42526E" stroke-width="1.1" fill="none"/></svg>
<div class="chev" style="left:977.5px;top:135.8px;color:#42526E;width:3.5px;height:3.5px"></div>
<div class="abs" style="left:538.2px;top:157.40px;width:8px;height:8px;background:#F1F2F4;border-radius:1.5px"></div>
<div class="chev" style="left:540.1px;top:158.50px;color:#253858;width:4px;height:4px;border-width:1.4px"></div>
<div class="t" style="left:550.2px;top:155.80px;font-size:8.2px;line-height:12px;color:#172B4D;font-weight:bold;letter-spacing:-0.05px;">Details</div>
<div class="t" style="left:550.5px;top:171.00px;font-size:8.7px;line-height:12px;color:#6B778C;font-weight:normal;letter-spacing:0px;">Type:</div>
<div class="t" style="left:550.5px;top:185.00px;font-size:8.7px;line-height:12px;color:#6B778C;font-weight:normal;letter-spacing:0px;">Status:</div>
<div class="t" style="left:550.5px;top:199.50px;font-size:8.7px;line-height:12px;color:#6B778C;font-weight:normal;letter-spacing:0px;">Priority:</div>
<div class="t" style="left:550.5px;top:213.80px;font-size:8.7px;line-height:12px;color:#6B778C;font-weight:normal;letter-spacing:0px;">Resolution:</div>
<div class="t" style="left:550.5px;top:228.20px;font-size:8.7px;line-height:12px;color:#6B778C;font-weight:normal;letter-spacing:0px;">Affects Version/s:</div>
<div class="t" style="left:550.5px;top:242.60px;font-size:8.7px;line-height:12px;color:#6B778C;font-weight:normal;letter-spacing:0px;">Fix Version/s:</div>
<div class="t" style="left:550.5px;top:256.80px;font-size:8.7px;line-height:12px;color:#6B778C;font-weight:normal;letter-spacing:0px;">Labels:</div>
<div class="t" style="left:550.5px;top:271.20px;font-size:8.7px;line-height:12px;color:#6B778C;font-weight:normal;letter-spacing:0px;">Sprint:</div>
<div class="t" style="left:550.5px;top:285.50px;font-size:8.7px;line-height:12px;color:#6B778C;font-weight:normal;letter-spacing:0px;">Story Points:</div>
<svg class="abs" style="left:642.8px;top:172.2px" width="9.3" height="9.5" viewBox="0 0 9.5 9.5"><rect width="9.5" height="9.5" rx="1.8" fill="#1D7AFC"/><rect x="2.1" y="2.1" width="3.2" height="3.3" rx="0.6" fill="none" stroke="#fff" stroke-width="1.1"/><rect x="4.6" y="4.4" width="3.1" height="3.2" fill="#fff"/></svg>
<div class="t" style="left:654.7px;top:171.00px;font-size:8.65px;line-height:12px;color:#172B4D;font-weight:normal;letter-spacing:0px;">Sub-task</div>
<div class="abs" style="left:642.8px;top:186.3px;width:52.2px;height:9.2px;background:#FFCB3F;border-radius:2px"></div>
<div class="t" style="left:646.3px;top:187px;font-size:6.6px;line-height:8px;font-weight:bold;color:#3D2E0A;letter-spacing:0.15px">IN PROGRESS</div>
<div class="t" style="left:697.5px;top:185.00px;font-size:8.55px;line-height:12px;color:#0052CC;font-weight:normal;letter-spacing:0px;">(View Workflow)</div>
<svg class="abs" style="left:643.5px;top:200.5px" width="7" height="9" viewBox="0 0 7 9"><path d="M1 4.5 L3.5 2 L6 4.5 M1 7.5 L3.5 5 L6 7.5" stroke="#E5493A" stroke-width="1.3" fill="none"/></svg>
<div class="t" style="left:654.8px;top:199.50px;font-size:8.6px;line-height:12px;color:#172B4D;font-weight:normal;letter-spacing:0px;">Major</div>
<div class="t" style="left:643px;top:213.80px;font-size:8.5px;line-height:12px;color:#172B4D;font-weight:normal;letter-spacing:0px;">Unresolved</div>
<div class="t" style="left:643px;top:228.20px;font-size:8.6px;line-height:12px;color:#172B4D;font-weight:normal;letter-spacing:0px;">None</div>
<div class="t" style="left:643px;top:242.60px;font-size:8.6px;line-height:12px;color:#0052CC;font-weight:normal;letter-spacing:0px;">1.0 - Team B</div>
<div class="t" style="left:643px;top:256.80px;font-size:8.6px;line-height:12px;color:#172B4D;font-weight:normal;letter-spacing:0px;">None</div>
<div class="t" style="left:643px;top:271.20px;font-size:8.5px;line-height:12px;color:#172B4D;font-weight:normal;letter-spacing:-0.25px;">Team B Sprint 1</div>
<div class="t" style="left:643px;top:285.50px;font-size:8.6px;line-height:12px;color:#172B4D;font-weight:normal;letter-spacing:0px;">2</div>
<div class="abs" style="left:838px;top:157.40px;width:8px;height:8px;background:#F1F2F4;border-radius:1.5px"></div>
<div class="chev" style="left:839.9px;top:158.50px;color:#253858;width:4px;height:4px;border-width:1.4px"></div>
<div class="t" style="left:850px;top:155.80px;font-size:8.2px;line-height:12px;color:#172B4D;font-weight:bold;letter-spacing:-0.05px;">People</div>
<div class="t" style="left:850px;top:172.30px;font-size:8.6px;line-height:12px;color:#6B778C;font-weight:normal;letter-spacing:0px;">Assignee:</div>
<svg class="abs" style="left:850px;top:188.7px" width="13.6" height="13.6" viewBox="0 0 14 14"><circle cx="7" cy="7" r="7" fill="#EE4B3B"/><circle cx="7" cy="7.4" r="4.6" fill="#FFF6E0"/><circle cx="7" cy="8.2" r="3.1" fill="#FFCF70"/><path d="M3.2 6.5 Q4 3 7 3 Q10 3 10.8 6.5 Q9.5 5 7 5.3 Q4.5 5 3.2 6.5Z" fill="#FFFFFF"/><circle cx="5.9" cy="8" r="0.5" fill="#333"/><circle cx="8.1" cy="8" r="0.5" fill="#333"/></svg>
<div class="t" style="left:866px;top:189.30px;font-size:8.6px;line-height:12px;color:#172B4D;font-weight:normal;letter-spacing:0px;">Mary</div>
<div class="t" style="left:850px;top:204.00px;font-size:8.6px;line-height:12px;color:#0052CC;font-weight:normal;letter-spacing:0px;">Assign to me</div>
<div class="t" style="left:850px;top:225.00px;font-size:8.6px;line-height:12px;color:#6B778C;font-weight:normal;letter-spacing:0px;">Reporter:</div>
<svg class="abs" style="left:850px;top:242px" width="13.6" height="13.6" viewBox="0 0 14.5 14.5"><circle cx="7.25" cy="7.25" r="7.25" fill="#4FC3B5"/><path d="M3 6 Q3.2 2.2 7.6 2.3 Q11 2.3 11.6 5.2 L11.6 6.5 L3 6.5Z" fill="#E8533A"/><rect x="3.6" y="5.6" width="7.4" height="4" rx="1.5" fill="#F7C29A"/><path d="M3.4 8 Q7.3 13.5 11.2 8 L10.2 8.6 Q7.3 10.6 4.4 8.6Z" fill="#E8533A"/><circle cx="5.8" cy="7" r="0.7" fill="#2A2A2A"/><circle cx="8.8" cy="7" r="0.7" fill="#2A2A2A"/></svg>
<div class="t" style="left:866px;top:242.30px;font-size:8.4px;line-height:12px;color:#172B4D;font-weight:normal;letter-spacing:0px;">M. Reynolds</div>
<div class="t" style="left:850px;top:258.90px;font-size:8.6px;line-height:12px;color:#6B778C;font-weight:normal;letter-spacing:0px;">Votes:</div>
<div class="abs" style="left:850px;top:274.4px;width:14px;height:9px;border-radius:4.5px;background:#DFE1E6"></div>
<div class="t" style="left:855px;top:274.9px;font-size:7px;line-height:8px;font-weight:bold;color:#253858">0</div>
<div class="t" style="left:850px;top:290.50px;font-size:8.6px;line-height:12px;color:#6B778C;font-weight:normal;letter-spacing:0px;">Watchers:</div>
<div class="abs" style="left:850px;top:307px;width:14px;height:9px;border-radius:4.5px;background:#0052CC"></div>
<div class="t" style="left:855.2px;top:307.5px;font-size:7px;line-height:8px;font-weight:bold;color:#fff">1</div>
<div class="t" style="left:866px;top:305.30px;font-size:8.65px;line-height:12px;color:#0052CC;font-weight:normal;letter-spacing:0px;">Stop watching this issue</div>
<div class="abs" style="left:538.2px;top:318.80px;width:8px;height:8px;background:#F1F2F4;border-radius:1.5px"></div>
<div class="chev" style="left:540.1px;top:319.90px;color:#253858;width:4px;height:4px;border-width:1.4px"></div>
<div class="t" style="left:550.2px;top:317.20px;font-size:8.2px;line-height:12px;color:#172B4D;font-weight:bold;letter-spacing:-0.05px;">Description</div>
<div class="t" style="left:550px;top:330.70px;font-size:8.75px;line-height:12px;color:#172B4D;font-weight:normal;letter-spacing:0px;">This sub-task implements the first part of functionality.</div>
<div class="abs" style="left:538.2px;top:363.30px;width:8px;height:8px;background:#F1F2F4;border-radius:1.5px"></div>
<div class="chev" style="left:540.1px;top:364.40px;color:#253858;width:4px;height:4px;border-width:1.4px"></div>
<div class="t" style="left:550.2px;top:361.70px;font-size:8.2px;line-height:12px;color:#172B4D;font-weight:bold;letter-spacing:-0.05px;">Attachments</div>
<div class="abs" style="left:807.9px;top:366px;width:1.8px;height:1.8px;border-radius:50%;background:#42526E"></div>
<div class="abs" style="left:811.1px;top:366px;width:1.8px;height:1.8px;border-radius:50%;background:#42526E"></div>
<div class="abs" style="left:814.3000000000001px;top:366px;width:1.8px;height:1.8px;border-radius:50%;background:#42526E"></div>
<div class="abs" style="left:543.5px;top:378px;width:276.5px;height:29.5px;border:1px dotted #C3C8D0;border-radius:1px"></div>
<svg class="abs" style="left:608px;top:387px" width="16" height="12" viewBox="0 0 16 12"><path d="M4 9.5 H3.5 C1.8 9.5 0.8 8.3 0.8 6.9 C0.8 5.5 1.9 4.4 3.3 4.4 C3.6 2.2 5.5 0.8 7.6 0.8 C9.9 0.8 11.6 2.4 11.9 4.4 C13.6 4.4 15.2 5.5 15.2 7.1 C15.2 8.5 14 9.5 12.5 9.5 H12" stroke="#6B778C" stroke-width="1" fill="none"/><path d="M8 11.5 V5.5 M5.8 7.7 L8 5.5 L10.2 7.7" stroke="#6B778C" stroke-width="1" fill="none"/></svg>
<div class="t" style="left:627.4px;top:386.8px;font-size:8.6px;line-height:12px;color:#172B4D">Drop files to attach, or <span style="color:#0052CC">browse.</span></div>
<div class="abs" style="left:538.2px;top:427.10px;width:8px;height:8px;background:#F1F2F4;border-radius:1.5px"></div>
<div class="chev" style="left:540.1px;top:428.20px;color:#253858;width:4px;height:4px;border-width:1.4px"></div>
<div class="t" style="left:550.2px;top:425.50px;font-size:8.2px;line-height:12px;color:#172B4D;font-weight:bold;letter-spacing:-0.05px;">Activity</div>
<div class="t" style="left:561.7px;top:442.00px;font-size:8.7px;line-height:12px;color:#42526E;font-weight:normal;letter-spacing:0px;">All</div>
<div class="t" style="left:583.8px;top:442.00px;font-size:8.7px;line-height:12px;color:#0052CC;font-weight:normal;letter-spacing:0px;">Comments</div>
<div class="t" style="left:637.9px;top:442.00px;font-size:8.7px;line-height:12px;color:#42526E;font-weight:normal;letter-spacing:0px;">Work Log</div>
<div class="t" style="left:686.6px;top:442.00px;font-size:8.7px;line-height:12px;color:#42526E;font-weight:normal;letter-spacing:0px;">History</div>
<div class="t" style="left:726.8px;top:442.00px;font-size:8.7px;line-height:12px;color:#42526E;font-weight:normal;letter-spacing:0px;">Activity</div>
<div class="abs" style="left:556px;top:455.5px;width:258px;height:1px;background:#DFE1E6"></div>
<div class="abs" style="left:583.8px;top:455.2px;width:42.5px;height:1.8px;background:#1D63D8"></div>
<div class="t" style="left:550px;top:462.00px;font-size:8.6px;line-height:12px;color:#172B4D;font-weight:normal;letter-spacing:0px;">There are no comments yet on this issue.</div>
<div class="abs" style="left:838px;top:337.80px;width:8px;height:8px;background:#F1F2F4;border-radius:1.5px"></div>
<div class="chev" style="left:839.9px;top:338.90px;color:#253858;width:4px;height:4px;border-width:1.4px"></div>
<div class="t" style="left:850px;top:336.20px;font-size:8.2px;line-height:12px;color:#172B4D;font-weight:bold;letter-spacing:-0.05px;">Dates</div>
<div class="t" style="left:849.7px;top:351.30px;font-size:8.6px;line-height:12px;color:#6B778C;font-weight:normal;letter-spacing:0px;">Created:</div>
<div class="t" style="left:849.7px;top:365.10px;font-size:8.6px;line-height:12px;color:#172B4D;font-weight:normal;letter-spacing:0px;">08/Feb/16 2:02 AM</div>
<div class="t" style="left:849.7px;top:384.00px;font-size:8.6px;line-height:12px;color:#6B778C;font-weight:normal;letter-spacing:0px;">Updated:</div>
<div class="t" style="left:849.7px;top:397.60px;font-size:8.6px;line-height:12px;color:#172B4D;font-weight:normal;letter-spacing:0px;">13/Apr/18 7:34 AM</div>
<div class="t" style="left:849.5px;top:431px;font-size:11.7px;line-height:14px;color:#172B4D">Time Tracking</div>
<div class="abs" style="left:979.5px;top:434.3px;width:6px;height:1.5px;background:#42526E"></div><div class="abs" style="left:981.75px;top:432px;width:1.5px;height:6px;background:#42526E"></div>
<div class="abs" style="left:851.3px;top:449.8px;width:6.5px;height:6.5px;background:#DFE1E6;border-radius:1px"></div>
<svg class="abs" style="left:851.8px;top:450.3px" width="5.5" height="5.5" viewBox="0 0 6 6"><path d="M1 3 L2.5 4.5 L5 1.5" stroke="#172B4D" stroke-width="1.1" fill="none"/></svg>
<div class="t" style="left:865px;top:447.00px;font-size:8.7px;line-height:12px;color:#42526E;font-weight:normal;letter-spacing:0px;">Include structure sub-issues</div>
<div class="t" style="left:849.7px;top:463.50px;font-size:8.6px;line-height:12px;color:#6B778C;font-weight:normal;letter-spacing:0px;">Estimated:</div>
<div id="foot"><svg class="abs" style="left:967.2px;top:4.6px" width="7.7" height="7.7" viewBox="0 0 8 8"><circle cx="4" cy="4" r="4" fill="#253858"/><circle cx="4" cy="2.3" r="0.8" fill="#fff"/><path d="M4 3.6 V6.4" stroke="#fff" stroke-width="1.3"/></svg><div class="t" style="left:977.5px;top:3px;font-size:8.6px;line-height:12px;color:#42526E">Info</div><div class="t" style="left:8.8px;top:4px;font-size:7.9px;line-height:9px;letter-spacing:-0.1px;color:#172B4D">Showing <b>62</b> items</div></div>
</body></html>
